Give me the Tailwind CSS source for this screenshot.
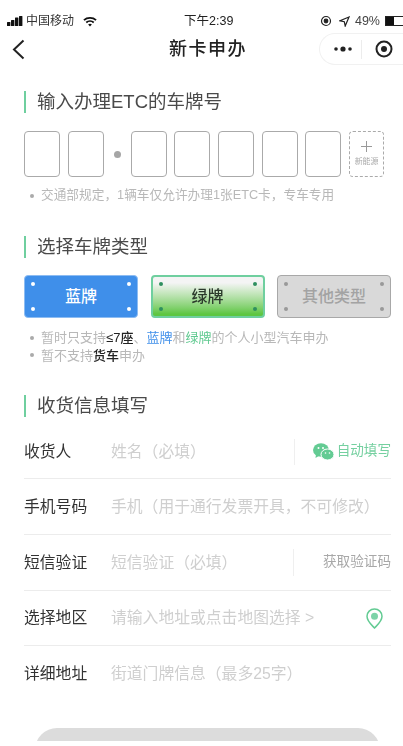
<!DOCTYPE html>
<html lang="zh-CN">
<head>
  <meta charset="UTF-8" />
  <meta name="viewport" content="width=device-width, initial-scale=1" />
  <title>新卡申办</title>
  <script src="https://cdn.jsdelivr.net/npm/@tailwindcss/browser@4"></script>
</head>
<body class="bg-white font-['Liberation_Sans','Noto_Sans_CJK_SC',sans-serif] text-[#333]">
  <div class="w-[403px] h-[746px] overflow-hidden flex flex-col blur-[0.4px]">

    <!-- status bar -->
    <div class="h-[33px] pt-[9px] px-[7px] flex items-center justify-between text-[12px] text-[#222] relative">
      <div class="flex items-center gap-[3px]">
        <svg width="16" height="10" viewBox="0 0 16 10" fill="#111"><rect x="0" y="6" width="3.400" height="4" rx=".5"/><rect x="4" y="4" width="3.400" height="6" rx=".5"/><rect x="8" y="1.500" width="3.400" height="8.500" rx=".5"/><rect x="12" y="0" width="3.400" height="10" rx=".5"/></svg>
        <span class="text-[12px] text-[#333]">中国移动</span>
        <svg class="ml-[6px]" width="14" height="11" viewBox="0 0 15 11" fill="none" stroke="#111" stroke-width="2"><path d="M1 4c3.600-3.200 9.400-3.200 13 0"/><path d="M3.500 6.500c2.200-1.900 5.800-1.900 8 0"/><path d="M7.500 10.800 5.500 8.600c1-.8 3-.8 4 0z" fill="#111" stroke="none"/></svg>
      </div>
      <span class="absolute left-[184px] text-[12.500px]">下午2:39</span>
      <div class="flex items-center gap-[5px] -mr-[7px]">
        <svg width="12" height="12" viewBox="0 0 12 12" fill="none" stroke="#222" stroke-width="1.200"><circle cx="6" cy="6" r="4.500"/><circle cx="6" cy="6" r="1.800" fill="#222"/></svg>
        <svg class="ml-[2px]" width="11" height="11" viewBox="0 0 11 11" fill="none" stroke="#222" stroke-width="1.200"><path d="M10 1 1 4.800l4.300.9.900 4.300z"/></svg>
        <span class="text-[12.500px] text-[#444]">49%</span>
        <div class="w-[18px] h-[10px] bg-white border border-[#222] border-r-0 flex">
          <div class="w-[8px] bg-[#111]"></div>
        </div>
      </div>
    </div>

    <!-- nav -->
    <div class="h-[32px] flex items-center relative">
      <svg class="ml-[12px]" width="13" height="21" viewBox="0 0 13 21" fill="none" stroke="#222" stroke-width="2"><path d="M11.500 1.500 2 10.500l9.500 9"/></svg>
      <span class="absolute left-[169px] top-[3px] text-[18px] leading-[26px] font-medium tracking-[1.500px] text-[#222]">新卡申办</span>
      <div class="ml-auto w-[84px] h-[32px] rounded-l-full border border-r-0 border-[#f1f1f1] flex items-center">
        <svg class="ml-[13px]" width="20" height="6" viewBox="0 0 20 6" fill="#222"><circle cx="3" cy="3" r="1.800"/><circle cx="10" cy="3" r="2.600"/><circle cx="17" cy="3" r="1.800"/></svg>
        <div class="w-px h-[19px] bg-[#ececec] ml-[8px]"></div>
        <svg class="ml-[13px]" width="18" height="18" viewBox="0 0 18 18" fill="none" stroke="#222" stroke-width="2"><circle cx="9" cy="9" r="7.500"/><circle cx="9" cy="9" r="3" fill="#222" stroke="none"/></svg>
      </div>
    </div>

    <div class="px-[24px]">
      <!-- section 1 -->
      <div class="mt-[26px] h-[22px] flex items-center border-l-2 border-[#6fcf9f] pl-[11px] text-[18.500px] text-[#4a4a4a] whitespace-nowrap">输入办理ETC的车牌号</div>

      <div class="mt-[18px] flex w-[367px] h-[46px] items-center">
        <div class="w-[36px] h-[46px] rounded-[4px] border border-[#aaa]"></div>
        <div class="ml-[7.700px] w-[36px] h-[46px] rounded-[4px] border border-[#aaa]"></div>
        <div class="ml-[10px] mr-[10px] w-[7px] h-[7px] rounded-full bg-[#a6a6a6]"></div>
        <div class="w-[36px] h-[46px] rounded-[4px] border border-[#aaa]"></div>
        <div class="ml-[7.700px] w-[36px] h-[46px] rounded-[4px] border border-[#aaa]"></div>
        <div class="ml-[7.700px] w-[36px] h-[46px] rounded-[4px] border border-[#aaa]"></div>
        <div class="ml-[7.700px] w-[36px] h-[46px] rounded-[4px] border border-[#aaa]"></div>
        <div class="ml-[7.700px] w-[36px] h-[46px] rounded-[4px] border border-[#aaa]"></div>
        <div class="ml-[7.700px] w-[35px] h-[46px] rounded-[4px] border border-dashed border-[#aaa] flex flex-col items-center pt-[9px]">
          <svg width="11" height="11" viewBox="0 0 11 11" stroke="#999" stroke-width="1"><path d="M5.500 0v11M0 5.500h11"/></svg>
          <span class="mt-[5px] text-[8px] leading-[10px] text-[#aaa] whitespace-nowrap">新能源</span>
        </div>
      </div>

      <div class="mt-[11px] h-[16px] flex items-center text-[12.700px] text-[#b8b8b8] pl-[6px] whitespace-nowrap">
        <span class="w-[4px] h-[4px] rounded-full bg-[#aaa] mr-[7px]"></span>交通部规定，1辆车仅允许办理1张ETC卡，专车专用
      </div>

      <!-- section 2 -->
      <div class="mt-[32px] h-[22px] flex items-center border-l-2 border-[#6fcf9f] pl-[11px] text-[18.500px] text-[#4a4a4a]">选择车牌类型</div>

      <div class="mt-[17px] flex justify-between w-[367px]">
        <div class="relative w-[114px] h-[43px] rounded-[4px] bg-[#3f8fea] border border-[#8dbcf2] flex items-center justify-center text-[16px] font-medium text-white">
          蓝牌
          <span class="absolute left-[6px] top-[6px] w-[4px] h-[4px] rounded-full bg-white"></span>
          <span class="absolute right-[6px] top-[6px] w-[4px] h-[4px] rounded-full bg-white"></span>
          <span class="absolute left-[6px] bottom-[6px] w-[4px] h-[4px] rounded-full bg-white"></span>
          <span class="absolute right-[6px] bottom-[6px] w-[4px] h-[4px] rounded-full bg-white"></span>
        </div>
        <div class="relative w-[114px] h-[43px] rounded-[4px] bg-linear-to-b from-[#f4f4f4] from-15% to-[#5ec641] to-95% border-2 border-[#6fcf9f] flex items-center justify-center text-[16px] font-medium text-[#2c3a2c]">
          绿牌
          <span class="absolute left-[6px] top-[5px] w-[4px] h-[4px] rounded-full bg-[#2f8f5f]"></span>
          <span class="absolute right-[6px] top-[5px] w-[4px] h-[4px] rounded-full bg-[#2f8f5f]"></span>
          <span class="absolute left-[6px] bottom-[5px] w-[4px] h-[4px] rounded-full bg-[#2f8f5f]"></span>
          <span class="absolute right-[6px] bottom-[5px] w-[4px] h-[4px] rounded-full bg-[#2f8f5f]"></span>
        </div>
        <div class="relative w-[114px] h-[43px] rounded-[4px] bg-[#d9d9d9] border border-[#a8a8a8] flex items-center justify-center text-[16px] font-medium text-[#a3a3a3]">
          其他类型
          <span class="absolute left-[6px] top-[6px] w-[4px] h-[4px] rounded-full bg-[#999]"></span>
          <span class="absolute right-[6px] top-[6px] w-[4px] h-[4px] rounded-full bg-[#999]"></span>
          <span class="absolute left-[6px] bottom-[6px] w-[4px] h-[4px] rounded-full bg-[#999]"></span>
          <span class="absolute right-[6px] bottom-[6px] w-[4px] h-[4px] rounded-full bg-[#999]"></span>
        </div>
      </div>

      <div class="mt-[11px] text-[13px] leading-[17.500px] text-[#b8b8b8] pl-[6px]">
        <div class="flex items-center">
          <span class="w-[4px] h-[4px] rounded-full bg-[#aaa] mr-[7px]"></span>暂时只支持<b class="font-medium text-[#222]">≤7座</b>、<span class="text-[#3f8fea]">蓝牌</span>和<span class="text-[#5ec98f]">绿牌</span>的个人小型汽车申办
        </div>
        <div class="flex items-center">
          <span class="w-[4px] h-[4px] rounded-full bg-[#aaa] mr-[7px]"></span>暂不支持<b class="font-medium text-[#222]">货车</b>申办
        </div>
      </div>

      <!-- section 3 -->
      <div class="mt-[31px] h-[22px] flex items-center border-l-2 border-[#6fcf9f] pl-[11px] text-[18.500px] text-[#4a4a4a]">收货信息填写</div>

      <div class="mt-[8px] w-[367px] text-[15.800px]">
        <div class="h-[54px] flex items-center border-b border-[#ececec]">
          <span class="w-[87px] text-[#333]">收货人</span>
          <span class="text-[#cfcfcf]">姓名（必填）</span>
          <div class="ml-auto h-[26px] w-[97px] border-l border-[#efefef] flex items-center justify-end">
            <svg width="21" height="18" viewBox="0 0 21 18" fill="#63cb93"><ellipse cx="8" cy="7" rx="8" ry="6.800"/><path d="M3 11 2.500 15l4-2.500z"/><ellipse cx="14.500" cy="11.500" rx="6.500" ry="5.500" stroke="#fff" stroke-width="1"/><circle cx="5.500" cy="5" r="1" fill="#fff"/><circle cx="10" cy="5" r="1" fill="#fff"/><circle cx="12.500" cy="10" r=".8" fill="#fff"/><circle cx="16.500" cy="10" r=".8" fill="#fff"/></svg>
            <span class="ml-[3px] text-[13.600px] text-[#75d0a0]">自动填写</span>
          </div>
        </div>
        <div class="h-[56px] flex items-center border-b border-[#ececec]">
          <span class="w-[87px]">手机号码</span>
          <span class="text-[#cfcfcf]">手机（用于通行发票开具，不可修改）</span>
        </div>
        <div class="h-[56px] flex items-center border-b border-[#ececec]">
          <span class="w-[87px]">短信验证</span>
          <span class="text-[#cfcfcf]">短信验证（必填）</span>
          <div class="ml-auto h-[27px] w-[98px] border-l border-[#efefef] flex items-center justify-end text-[13.600px] text-[#a8a8a8]">获取验证码</div>
        </div>
        <div class="h-[55px] flex items-center border-b border-[#ececec]">
          <span class="w-[87px]">选择地区</span>
          <span class="text-[#cfcfcf]">请输入地址或点击地图选择 &gt;</span>
          <svg class="ml-auto mr-[8.500px]" width="17" height="21" viewBox="0 0 17 21"><path d="M8.500 1C4.300 1 1 4.300 1 8.300c0 5 4.500 8.500 7.500 11.700 3-3.200 7.500-6.700 7.500-11.700C16 4.300 12.700 1 8.500 1z" fill="none" stroke="#63cb93" stroke-width="1.500"/><circle cx="8.500" cy="8.300" r="3.500" fill="#7dd3a8"/></svg>
        </div>
        <div class="h-[56px] flex items-center">
          <span class="w-[87px]">详细地址</span>
          <span class="text-[#cfcfcf]">街道门牌信息（最多25字）</span>
        </div>
      </div>
    </div>

    <!-- submit button, cut off by the screenshot -->
    <div class="mt-[26px] ml-[35px] mr-[23px] h-[13px] overflow-hidden">
      <div class="h-[44px] rounded-full bg-[#dcdcdc]"></div>
    </div>
  </div>
</body>
</html>
